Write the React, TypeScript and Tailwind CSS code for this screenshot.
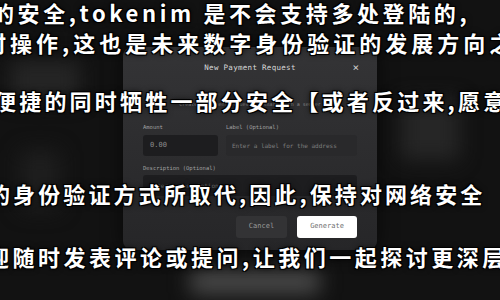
import React from 'react';

const outline =
  '[text-shadow:0_0_2px_#000,1px_1px_0_#000,-1px_-1px_0_#000,1px_-1px_0_#000,-1px_1px_0_#000,0_0_6px_rgba(0,0,0,0.9)]';

function Overlay() {
  const lines = [
    { text: '的安全,tokenim 是不会支持多处登陆的,', cls: 'top-[-2px] left-[-8px] tracking-[3.6px]' },
    { text: '时操作,这也是未来数字身份验证的发展方向之一', cls: 'top-[28px] left-[-16px] tracking-[4px]' },
    { text: '便捷的同时牺牲一部分安全【或者反过来,愿意', cls: 'top-[86px] left-[-6px] tracking-[3.2px]' },
    { text: '的身份验证方式所取代,因此,保持对网络安全', cls: 'top-[179px] left-[-12px] tracking-[3.1px]' },
    { text: '迎随时发表评论或提问,让我们一起探讨更深层', cls: 'top-[242px] left-[-13px] tracking-[3.5px]' },
  ];
  return (
    <div className="absolute inset-0 pointer-events-none">
      {lines.map((l, i) => (
        <div
          key={i}
          className={`absolute whitespace-nowrap text-[22px] leading-[28px] font-bold text-white ${outline} ${l.cls}`}
          style={{ fontFamily: '"Noto Sans CJK SC", "Noto Sans", sans-serif' }}
        >
          {l.text}
        </div>
      ))}
    </div>
  );
}

function Backdrop() {
  // the blurred page behind the dialog
  return (
    <div className="absolute inset-0 blur-[10px]">
      <div className="absolute left-[10px] top-[60px] w-[70px] h-[40px] bg-[#252525] rounded" />
      <div className="absolute left-[20px] top-[150px] w-[40px] h-[60px] bg-[#1e1e1e] rounded" />
      <div className="absolute left-[400px] top-[100px] w-[60px] h-[60px] bg-[#262626] rounded" />
      <div className="absolute left-[190px] top-[270px] w-[130px] h-[24px] bg-[#4a4a4a] rounded" />
    </div>
  );
}

export default function App() {
  return (
    <div
      className="relative w-[500px] h-[300px] overflow-hidden bg-[#121212]"
      style={{ fontFamily: '"DejaVu Sans Mono", "Liberation Mono", monospace' }}
    >
      <Backdrop />
      <div className="relative flex justify-center pt-[47px]">
        <div className="w-[254px] h-[203px] rounded-[9px] bg-gradient-to-b from-[#343436] to-[#262628] px-[20px] pt-[14px] shadow-[0_0_20px_rgba(0,0,0,0.6)]">
          <div className="relative flex items-center justify-center h-[14px]">
            <span className="text-[7.5px] text-[#d8d8d8] tracking-[0.3px]">New Payment Request</span>
            <span className="absolute right-[-2px] top-[0px] text-[11px] leading-[14px] text-[#cfcfcf]">×</span>
          </div>
          <div className="mt-[26px] text-center text-[5px] text-[#8a8a8a]">
            Create a payment request to share with a sender
          </div>
          <div className="mt-[14px] flex gap-[8px]">
            <div className="w-[75px]">
              <div className="text-[5.5px] text-[#a0a0a0] h-[8px]">Amount</div>
              <div className="mt-[4px] h-[21px] rounded-[3px] bg-[#1d1d1f] flex items-center px-[7px] text-[7px] text-[#8c8c8c]">
                0.00
              </div>
            </div>
            <div className="flex-1">
              <div className="text-[5.5px] text-[#a0a0a0] h-[8px]">Label (Optional)</div>
              <div className="mt-[4px] h-[21px] rounded-[3px] bg-[#29292b] flex items-center px-[6px] text-[6px] text-[#7e7e7e]">
                Enter a label for the address
              </div>
            </div>
          </div>
          <div className="mt-[8px] text-[5.5px] text-[#a0a0a0] h-[8px]">Description (Optional)</div>
          <div className="mt-[3px] h-[21px] rounded-[3px] bg-[#1d1d1f] flex items-center px-[7px] text-[6px] text-[#6e6e6e]">
            Enter a description
          </div>
          <div className="mt-[20px] flex justify-end gap-[10px]">
            <div className="w-[51px] h-[22px] rounded-[3px] bg-[#333335] flex items-center justify-center text-[7px] text-[#9a9a9a]">
              Cancel
            </div>
            <div className="w-[60px] h-[22px] rounded-[3px] bg-white flex items-center justify-center text-[7px] text-[#707070]">
              Generate
            </div>
          </div>
        </div>
      </div>
      <Overlay />
    </div>
  );
}
